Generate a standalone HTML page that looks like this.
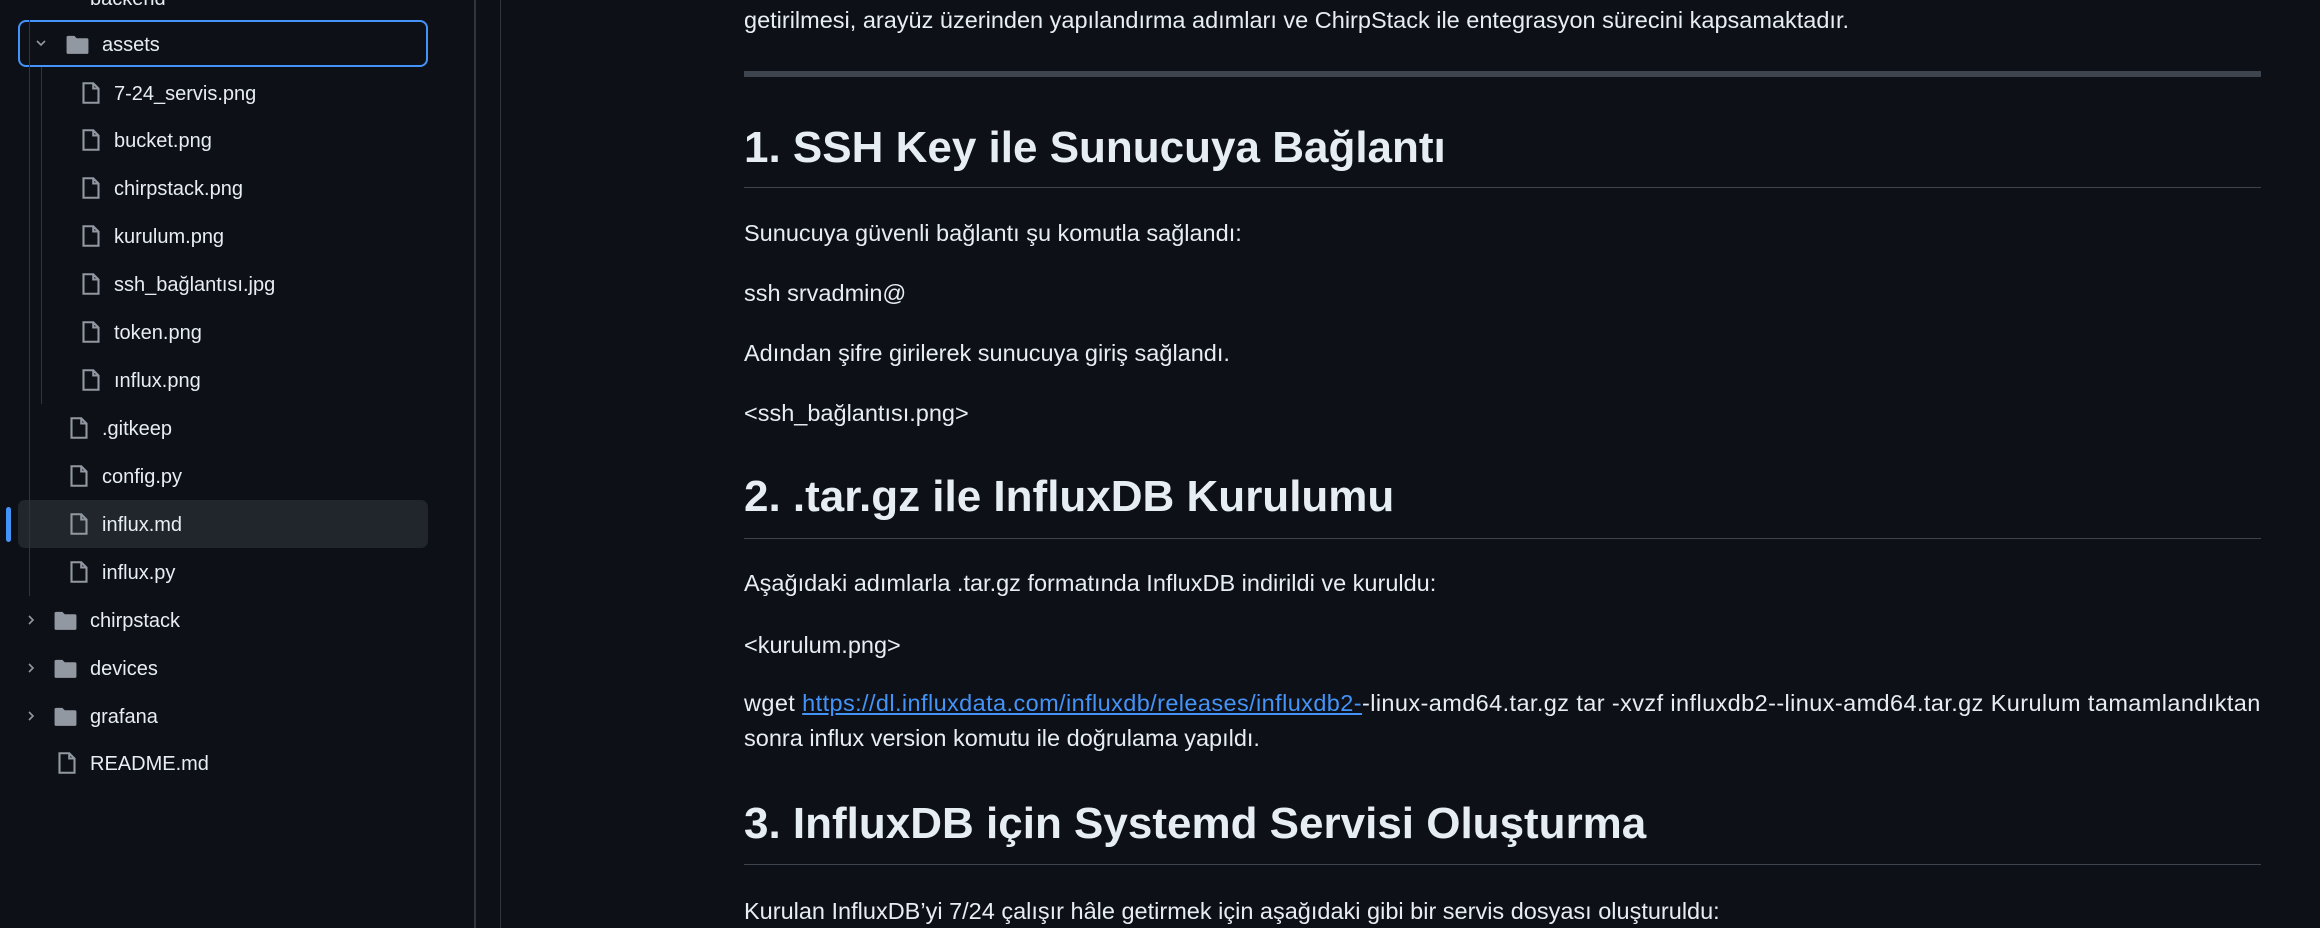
<!DOCTYPE html>
<html><head><meta charset="utf-8"><style>
*{margin:0;padding:0;box-sizing:border-box}
body{width:2320px;height:928px;background:#0d1117;color:#e6edf3;font-family:"Liberation Sans","DejaVu Sans",sans-serif;overflow:hidden;position:relative}
.a{position:absolute;white-space:nowrap}
.s{font-size:20px;line-height:24px;margin-top:1px}
.p{font-size:23.5px;line-height:30px;left:744px}
.h{font-size:44px;font-weight:600;left:744px;line-height:52px}
.ul{position:absolute;left:744px;width:1517px;height:1px;background:#3d444d}
a{color:#4493f8;text-decoration:underline}
svg{position:absolute}
</style></head><body>
<div class="a s" style="left:90px;top:-14px">backend</div>
<div style="position:absolute;left:18px;top:20px;width:410px;height:47px;border:2px solid #4493f8;border-radius:8px"></div>
<div style="position:absolute;left:18px;top:500px;width:410px;height:48px;background:#21262d;border-radius:7px"></div>
<div style="position:absolute;left:6px;top:507px;width:5px;height:35px;background:#4493f8;border-radius:3px"></div>
<div style="position:absolute;left:29px;top:20px;width:1px;height:576px;background:#30363d"></div>
<div style="position:absolute;left:41px;top:67px;width:1px;height:337px;background:#30363d"></div>
<div style="position:absolute;left:474px;top:0;width:2px;height:928px;background:#30363d"></div>
<div style="position:absolute;left:500px;top:0;width:1px;height:928px;background:#30363d"></div>

<svg width="0" height="0"><defs>
<symbol id="f" viewBox="0 0 16 16"><path fill="none" stroke="#9198a1" stroke-width="1.4" d="M3 1.5h6.5l3.5 3.5v9.5h-10z M9.5 1.5v3.5h3.5"/></symbol>
<symbol id="d" viewBox="0 0 16 16"><path fill="#9198a1" d="M1 3.5a1 1 0 0 1 1-1h4l1.5 1.5h6.5a1 1 0 0 1 1 1v8a1 1 0 0 1-1 1h-12a1 1 0 0 1-1-1z"/></symbol>
</defs></svg>

<svg style="left:34px;top:36px" width="14" height="14" viewBox="0 0 14 14"><path d="M3 5l4 4 4-4" fill="none" stroke="#9198a1" stroke-width="1.6"/></svg>
<svg style="left:65px;top:32px" width="25" height="25"><use href="#d"/></svg>
<div class="a s" style="left:102px;top:32px">assets</div>

<svg style="left:79px;top:81px" width="24" height="24"><use href="#f"/></svg><div class="a s" style="left:114px;top:81px">7-24_servis.png</div>
<svg style="left:79px;top:128px" width="24" height="24"><use href="#f"/></svg><div class="a s" style="left:114px;top:128px">bucket.png</div>
<svg style="left:79px;top:176px" width="24" height="24"><use href="#f"/></svg><div class="a s" style="left:114px;top:176px">chirpstack.png</div>
<svg style="left:79px;top:224px" width="24" height="24"><use href="#f"/></svg><div class="a s" style="left:114px;top:224px">kurulum.png</div>
<svg style="left:79px;top:272px" width="24" height="24"><use href="#f"/></svg><div class="a s" style="left:114px;top:272px">ssh_bağlantısı.jpg</div>
<svg style="left:79px;top:320px" width="24" height="24"><use href="#f"/></svg><div class="a s" style="left:114px;top:320px">token.png</div>
<svg style="left:79px;top:368px" width="24" height="24"><use href="#f"/></svg><div class="a s" style="left:114px;top:368px">ınflux.png</div>

<svg style="left:67px;top:416px" width="24" height="24"><use href="#f"/></svg><div class="a s" style="left:102px;top:416px">.gitkeep</div>
<svg style="left:67px;top:464px" width="24" height="24"><use href="#f"/></svg><div class="a s" style="left:102px;top:464px">config.py</div>
<svg style="left:67px;top:512px" width="24" height="24"><use href="#f"/></svg><div class="a s" style="left:102px;top:512px">influx.md</div>
<svg style="left:67px;top:560px" width="24" height="24"><use href="#f"/></svg><div class="a s" style="left:102px;top:560px">influx.py</div>

<svg style="left:24px;top:613px" width="14" height="14" viewBox="0 0 14 14"><path d="M5 3l4 4-4 4" fill="none" stroke="#9198a1" stroke-width="1.6"/></svg>
<svg style="left:53px;top:608px" width="25" height="25"><use href="#d"/></svg><div class="a s" style="left:90px;top:608px">chirpstack</div>
<svg style="left:24px;top:661px" width="14" height="14" viewBox="0 0 14 14"><path d="M5 3l4 4-4 4" fill="none" stroke="#9198a1" stroke-width="1.6"/></svg>
<svg style="left:53px;top:656px" width="25" height="25"><use href="#d"/></svg><div class="a s" style="left:90px;top:656px">devices</div>
<svg style="left:24px;top:709px" width="14" height="14" viewBox="0 0 14 14"><path d="M5 3l4 4-4 4" fill="none" stroke="#9198a1" stroke-width="1.6"/></svg>
<svg style="left:53px;top:704px" width="25" height="25"><use href="#d"/></svg><div class="a s" style="left:90px;top:704px">grafana</div>
<svg style="left:55px;top:751px" width="24" height="24"><use href="#f"/></svg><div class="a s" style="left:90px;top:751px">README.md</div>

<div class="a p" style="top:5px">getirilmesi, arayüz üzerinden yapılandırma adımları ve ChirpStack ile entegrasyon sürecini kapsamaktadır.</div>
<div style="position:absolute;left:744px;top:71px;width:1517px;height:6px;background:#3d444d"></div>
<div class="a h" style="top:122px">1. SSH Key ile Sunucuya Bağlantı</div>
<div class="ul" style="top:187px"></div>
<div class="a p" style="top:218px">Sunucuya güvenli bağlantı şu komutla sağlandı:</div>
<div class="a p" style="top:278px">ssh srvadmin@</div>
<div class="a p" style="top:338px">Adından şifre girilerek sunucuya giriş sağlandı.</div>
<div class="a p" style="top:398px">&lt;ssh_bağlantısı.png&gt;</div>
<div class="a h" style="top:471px">2. .tar.gz ile InfluxDB Kurulumu</div>
<div class="ul" style="top:538px"></div>
<div class="a p" style="top:568px">Aşağıdaki adımlarla .tar.gz formatında InfluxDB indirildi ve kuruldu:</div>
<div class="a p" style="top:630px">&lt;kurulum.png&gt;</div>
<div class="a p" style="top:688px;letter-spacing:0.4px">wget <a>https://dl.influxdata.com/influxdb/releases/influxdb2-</a>-linux-amd64.tar.gz tar -xvzf influxdb2--linux-amd64.tar.gz Kurulum tamamlandıktan</div>
<div class="a p" style="top:723px">sonra influx version komutu ile doğrulama yapıldı.</div>
<div class="a h" style="top:798px">3. InfluxDB için Systemd Servisi Oluşturma</div>
<div class="ul" style="top:864px"></div>
<div class="a p" style="top:896px">Kurulan InfluxDB’yi 7/24 çalışır hâle getirmek için aşağıdaki gibi bir servis dosyası oluşturuldu:</div>
</body></html>
